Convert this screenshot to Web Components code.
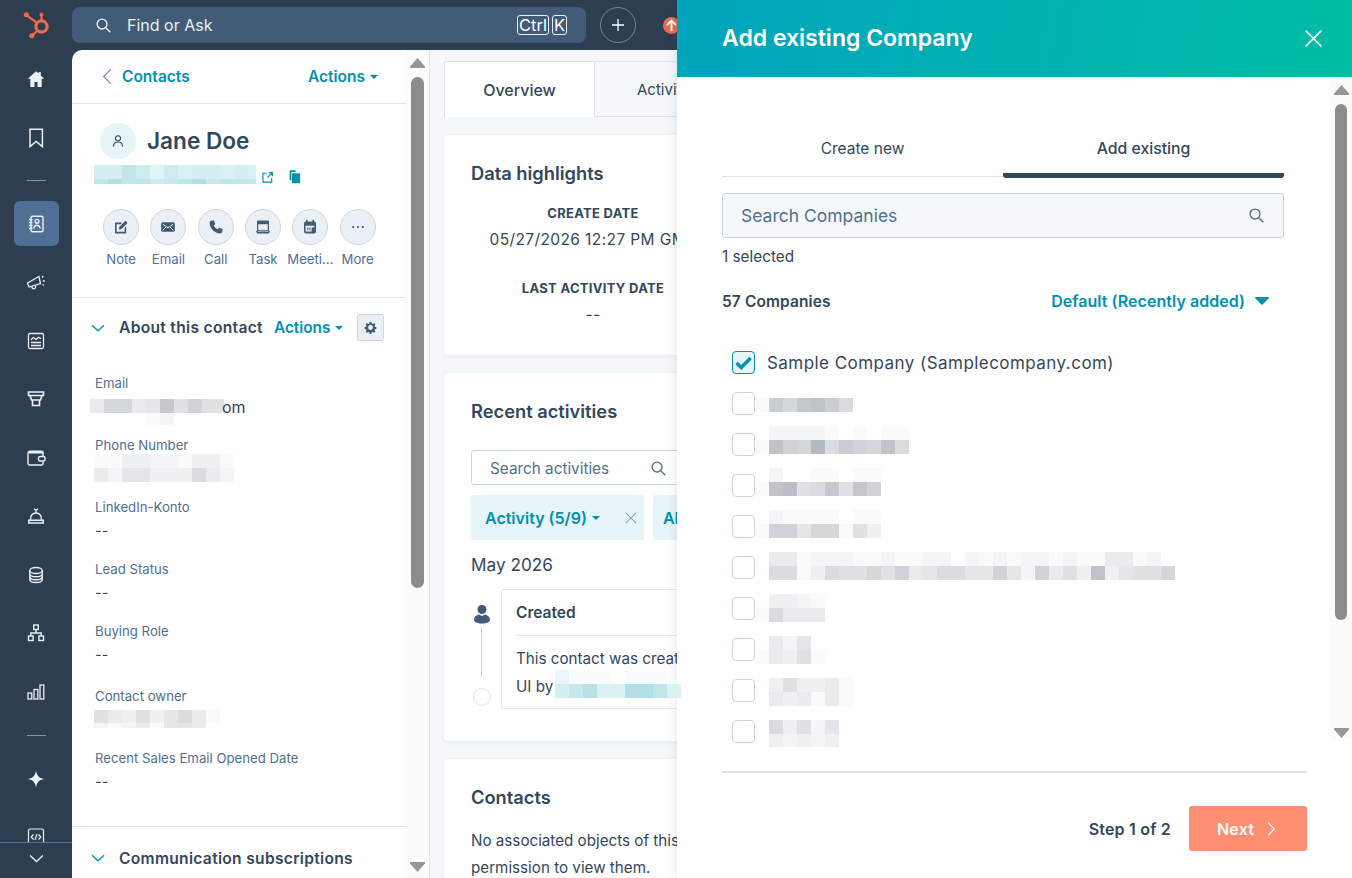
<!doctype html>
<html lang="en"><head><meta charset="utf-8"><title>Add existing Company</title>
<style>
html,body{margin:0;height:100%;overflow:hidden;background:#2d3e50}
body{font-family:"Inter","Noto Sans",sans-serif;color:#33475b;--teal:#0091ae;--ink:#33475b;--soft:#516f90}
</style></head><body>
<hs-app></hs-app>
<script>
const ICON={
home:'<path fill="currentColor" d="M10 2.200 1.800 9.800h2.500V18h4.200v-5h3V18h4.200V9.800h2.500L14.800 6.400V3h-2.100v1.500z"/>',
mark:'<path fill="none" stroke="currentColor" stroke-width="1.500" d="M4 1.200h12.400v17.400l-6.200-5.200-6.200 5.200z"/>',
book:'<g fill="none" stroke="currentColor" stroke-width="1.400"><rect x="5" y="2.200" width="12" height="15.600" rx="1.500"/><path d="M3 5.500h3.600M3 8.500h3.600M3 11.500h3.600M3 14.500h3.600"/><circle cx="11" cy="7.300" r="1.900"/><path d="M7.800 14.500c.3-2.300 1.500-3.200 3.200-3.200s2.900.9 3.200 3.200"/></g>',
horn:'<g fill="none" stroke="currentColor" stroke-width="1.300"><path d="M1.500 11 13 4.500l1.500 7L3 15z"/><path d="M6 14.200c-.2 1.800.5 2.600 1.800 2.600s2-.9 1.700-3.300"/><path d="M16 5.500 17.300 3.800M16.800 9h2M16.500 12.500l1.500.8"/></g>',
report:'<g fill="none" stroke="currentColor" stroke-width="1.300"><rect x="2.500" y="2.500" width="15" height="15" rx="1.500"/><path d="M5 8.800l2.500-2.300 2.500 2 2.500-2.300 2.500 1.600M5 11.500h10M5 14.500h10"/></g>',
store:'<g fill="none" stroke="currentColor" stroke-width="1.600"><path d="M2.500 3h15v3.500h-15zM4 6.500l1.500 4.500h9L16 6.500M6.500 11v5.500h7V11"/></g>',
wallet:'<g fill="none" stroke="currentColor" stroke-width="1.400"><path d="M17 6V4.500c0-.8-.6-1.300-1.300-1.300H4.500C3 3.200 2 4 2 5.500v9.500c0 1.300.9 2 2 2h11.700c.8 0 1.300-.6 1.300-1.300V14"/><path d="M3 4.800h12.700c.8 0 1.300.5 1.300 1.300v2.400"/><rect x="12.500" y="8.500" width="6.500" height="4.500" rx="1.500"/></g>',
bell:'<g fill="none" stroke="currentColor" stroke-width="1.400"><path d="M4.500 13.800c0-4 2-6.800 5.500-6.800s5.500 2.800 5.500 6.800M10 7V4M8 2.800 10 4.300l2-1.500"/><path d="M2.700 14.300h14.600v2.700H2.700z"/></g>',
db:'<g fill="none" stroke="currentColor" stroke-width="1.400"><ellipse cx="10" cy="5.500" rx="6.200" ry="3"/><path d="M3.800 5.500v9c0 1.700 2.800 3 6.200 3s6.200-1.300 6.200-3v-9M3.800 8.800c0 1.700 2.800 3 6.200 3s6.200-1.300 6.200-3M3.800 11.800c0 1.700 2.800 3 6.200 3s6.200-1.300 6.200-3"/></g>',
org:'<g fill="none" stroke="currentColor" stroke-width="1.400"><rect x="7.700" y="2" width="4.600" height="4.500"/><rect x="2.500" y="13" width="4.600" height="4.500"/><rect x="12.900" y="13" width="4.600" height="4.500"/><path d="M10 6.500V10M4.800 13v-3h10.400v3"/></g>',
bars:'<g fill="none" stroke="currentColor" stroke-width="1.300"><rect x="2" y="11" width="3.800" height="6"/><rect x="8" y="7.500" width="3.800" height="9.500"/><rect x="14" y="3" width="3.800" height="14"/></g>',
spark:'<path fill="currentColor" d="M10 1.500c.7 5 2.800 7.500 8 8.500-5.200 1-7.300 3.500-8 8.500-.7-5-2.800-7.500-8-8.500 5.200-1 7.300-3.500 8-8.500z"/>',
code:'<g fill="none" stroke="currentColor" stroke-width="1.200"><rect x="2.500" y="2" width="15" height="16" rx="1.500"/><path d="M7.500 7.500 5.200 10l2.300 2.500M12.500 7.500l2.300 2.500-2.300 2.500M11 7l-2 6"/></g>',
down:'<path fill="none" stroke="currentColor" stroke-width="1.600" d="M2.500 6.500 10 13.500l7.500-7"/>',
search:'<g fill="none" stroke="currentColor" stroke-width="1.600"><circle cx="8.300" cy="8.300" r="5.800"/><path d="M12.600 12.600 18 18"/></g>',
plus:'<path fill="none" stroke="currentColor" stroke-width="1.600" d="M10 2.500v15M2.500 10h15"/>',
back:'<path fill="none" stroke="currentColor" stroke-width="1.500" d="M14 1.500 5.500 10l8.500 8.500"/>',
x:'<path fill="none" stroke="currentColor" stroke-width="1.500" d="M2.500 2.500l15 15M17.500 2.500l-15 15"/>',
ext:'<g fill="none" stroke="currentColor" stroke-width="1.800"><path d="M9 3.500H3v13.500h13.500v-6M10 10l7.500-7.500M12 2.500h5.500V8"/></g>',
copy:'<g fill="currentColor"><path d="M6.500 5.500h9.500c1 0 1.500.6 1.500 1.500v10.500c0 1-.6 1.500-1.500 1.500H8c-1 0-1.500-.6-1.500-1.500z"/><path d="M4 1.500h7.500v2.500H5.800v11H3.500V2.300c0-.5.2-.8.5-.8z"/></g>',
user:'<g fill="none" stroke="currentColor" stroke-width="1.500"><circle cx="10" cy="6" r="3.600"/><path d="M3.500 18c.3-4.500 3-6.500 6.500-6.500s6.200 2 6.500 6.500"/></g>',
note:'<g fill="currentColor"><path d="M2.500 4.500h9l-2 2h-5v9.500h10v-5l2-2V18h-14z"/><path d="M8 9.800 15.500 2.300l2.700 2.700-7.500 7.500-3.400.7z"/></g>',
mail:'<rect x="1.500" y="4" width="17" height="12" rx="2" fill="currentColor"/><path fill="none" stroke="#eaf0f6" stroke-width="1.200" d="M3.500 6.500 10 11l6.500-4.500M3.500 14l4-4M16.500 14l-4-4"/>',
phone:'<path fill="currentColor" d="M4.500 2 7.500 1.800 9 6.300 7.200 8c.8 1.800 2.800 3.800 4.800 4.800l1.700-1.800 4.500 1.500-.2 3c-.2 1-1 2.500-3 2.500C8.500 18 2 11.500 2 5c0-2 1.500-2.800 2.500-3z"/>',
task:'<g fill="currentColor"><path d="M2.500 3.500c0-1 .6-1.500 1.500-1.500h12c.9 0 1.500.5 1.500 1.500v3h-15z"/><path fill="none" stroke="currentColor" stroke-width="1.500" d="M3.300 6v8.500M16.700 6v8.500"/><path d="M2.500 14c4-.9 11-.9 15 0l.8 1.200-.8 2.800h-15l-.8-2.800z"/></g><path fill="none" stroke="#eaf0f6" stroke-width="1" d="M3.500 15.500c4-.7 9-.7 13 0"/>',
meet:'<g fill="currentColor"><rect x="2.500" y="3" width="15" height="15" rx="2.500"/><rect x="5" y="1" width="2" height="4"/><rect x="13" y="1" width="2" height="4"/></g><path fill="#eaf0f6" d="M4.500 8.500H15.500v2H12v5H4.500z"/><path fill="currentColor" d="M6.500 10.500h1.300v3.500H6.500zM9.200 10.500h1.300v3.500H9.200z"/>',
dots:'<g fill="currentColor"><circle cx="4" cy="10" r="1.400"/><circle cx="10" cy="10" r="1.400"/><circle cx="16" cy="10" r="1.400"/></g>',
gear:'<path fill="currentColor" fill-rule="evenodd" d="M8.500 1.500h3l.4 2.300 1.500.7 2-1.300 2.100 2.100-1.300 2 .6 1.500 2.200.4v3l-2.200.4-.6 1.500 1.300 2-2.100 2.100-2-1.300-1.500.6-.4 2.200h-3l-.4-2.200-1.500-.6-2 1.300-2.100-2.100 1.300-2-.6-1.500-2.200-.4v-3l2.200-.4.6-1.500-1.300-2 2.100-2.100 2 1.300 1.500-.7zM10 6.300a3.700 3.700 0 1 0 0 7.400 3.700 3.700 0 0 0 0-7.400z"/>',
person:'<g fill="currentColor"><circle cx="10" cy="5.500" r="4.500"/><path d="M2 16c0-3 2.500-5 5-5.500l3 1.500 3-1.500c2.500.5 5 2.500 5 5.500 0 1.800-3.500 3.500-8 3.500s-8-1.700-8-3.500z"/></g>',
next:'<path fill="none" stroke="currentColor" stroke-width="1.500" d="M6.500 2 14 10l-7.500 8"/>',
caret:'<path fill="currentColor" d="M1 6h18l-9 9.500z"/>'
};
const svg=(n,s=20,extra='')=>`<svg viewBox="0 0 20 20" width="${s}" height="${s}" style="display:block;flex:none;${extra}" aria-hidden="true">${ICON[n]}</svg>`;
const caret=`<svg viewBox="0 0 8 4" width="8" height="4" style="flex:none" aria-hidden="true"><path fill="currentColor" d="M0 0h8L4 4z"/></svg>`;

class Base extends HTMLElement{
  connectedCallback(){ if(this.shadowRoot) return; this.attachShadow({mode:'open'}).innerHTML=this.view(); }
  attr(n,d=''){return this.hasAttribute(n)?this.getAttribute(n):d}
}
const def=(n,view)=>customElements.define(n,class extends Base{view(){return view(this)}});

/* pixelated redaction block */
def('hs-mosaic',el=>{
  const base=el.attr('tone')==='teal'?[150,212,221]:[176,181,188];
  const rows=el.attr('rows').split('|');
  const hs=el.attr('heights','14,14').split(',');
  const cw=+el.attr('cell','14');
  const mix=l=>{const t=parseInt(l,16)/15;return 'rgb('+base.map(b=>Math.round(255-(255-b)*t)).join(',')+')'};
  const body=rows.map((r,i)=>`<div class="r" style="height:${hs[i]}px">${[...r].map(c=>c==='0'?`<i style="background:transparent"></i>`:`<i style="background:${mix(c)}"></i>`).join('')}</div>`).join('');
  return `<style>:host{display:block;overflow:hidden;flex:none}.r{display:flex}i{display:block;width:${cw}px;flex:none}</style>${body}`;
});

def('hs-scrollbar',el=>`<style>
:host{display:flex;flex-direction:column;align-items:center;flex:none;box-sizing:border-box;background:#fbfbfb}
.t{flex:none;background:#8c8c8c;border-radius:7px}
.s{flex:1}
svg{flex:none;display:block}
</style>
<svg width="15" height="11" viewBox="0 0 15 11" style="margin-bottom:9px"><path fill="#969696" d="M7.500 1 14.500 9a1 1 0 0 1-.8 2H1.300a1 1 0 0 1-.8-2z"/></svg>
<div class="t" style="width:${el.attr('tw','13')}px;height:${el.attr('th')}px"></div>
<div class="s"></div>
<svg width="15" height="11" viewBox="0 0 15 11"><path fill="#969696" d="M7.500 10 14.500 2a1 1 0 0 0-.8-2H1.300a1 1 0 0 0-.8 2z"/></svg>`);

def('hs-nav-item',el=>`<style>
:host{display:flex;align-items:center;justify-content:center;height:58.500px;color:#eaf0f6;flex:none}
.b{width:45px;height:45px;border-radius:6px;display:flex;align-items:center;justify-content:center}
:host([active]) .b{background:#4f6f94}
</style><div class="b">${svg(el.attr('icon'),el.attr('size','20'))}</div>`);

def('hs-nav',()=>`<style>
:host{display:flex;flex-direction:column;width:72px;height:878px;background:#2d3e50;position:relative;overflow:hidden;flex:none}
.logo{height:50px;flex:none;display:flex;align-items:center;justify-content:center;color:#f2694a}
.sep{height:28.500px;flex:none;display:flex;align-items:center;justify-content:center}
.sep i{display:block;width:19px;height:1px;background:#8097b0}
.foot{position:absolute;left:0;right:0;bottom:0;height:36px;box-sizing:border-box;padding-bottom:4px;background:#2d3e50;border-top:1px solid #516f90;color:#eaf0f6;display:flex;align-items:center;justify-content:center}
</style>
<div class="logo"><svg width="28" height="28" viewBox="0 0 28 28" style="margin:-1px 0 0 2px"><g fill="none" stroke="currentColor"><circle cx="18.500" cy="15.500" r="5.600" stroke-width="3.200"/><path stroke-width="2.200" d="M18.500 9.500V3.500M13.800 11.600 3.800 4.300M14.300 19.700 9.300 24.500"/></g><g fill="currentColor"><circle cx="18.500" cy="3.500" r="2"/><circle cx="3.300" cy="3.800" r="2.500"/><circle cx="8.800" cy="24.800" r="2.500"/></g></svg></div>
<hs-nav-item icon="home"></hs-nav-item>
<hs-nav-item icon="mark"></hs-nav-item>
<div class="sep" style="height:27.500px"><i></i></div>
<hs-nav-item icon="book" active></hs-nav-item>
<hs-nav-item icon="horn"></hs-nav-item>
<hs-nav-item icon="report"></hs-nav-item>
<hs-nav-item icon="store"></hs-nav-item>
<hs-nav-item icon="wallet"></hs-nav-item>
<hs-nav-item icon="bell"></hs-nav-item>
<hs-nav-item icon="db"></hs-nav-item>
<hs-nav-item icon="org"></hs-nav-item>
<hs-nav-item icon="bars"></hs-nav-item>
<div class="sep"><i></i></div>
<hs-nav-item icon="spark"></hs-nav-item>
<hs-nav-item icon="code"></hs-nav-item>
<div class="foot">${svg('down',17)}</div>`);

def('hs-topbar',()=>`<style>
:host{display:flex;align-items:center;height:50px;flex:none;background:#2d3e50;color:#fff}
.s{width:514px;height:36px;box-sizing:border-box;background:#425b76;border-radius:8px;display:flex;align-items:center;padding:0 19px 0 23px;font-size:16px;color:#eaf0f6}
.s span.t{margin-left:15px;flex:1}
kbd{font:inherit;font-size:16.500px;line-height:18px;border:1px solid #eaf0f6;border-radius:3px;padding:0 1px;margin-left:3px;color:#fff}
.p{margin-left:14px;width:36px;height:36px;box-sizing:border-box;border:1px solid #6f88a3;border-radius:50%;display:flex;align-items:center;justify-content:center}
.u{margin-left:27px;width:17px;height:17px;border-radius:50%;background:#e66e50;display:flex;align-items:center;justify-content:center}
</style>
<div class="s">${svg('search',17)}<span class="t">Find or Ask</span><kbd>Ctrl</kbd><kbd>K</kbd></div>
<div class="p">${svg('plus',16)}</div>
<div class="u"><svg width="11" height="12" viewBox="0 0 11 12"><path fill="none" stroke="#fff" stroke-width="1.800" d="M5.500 12V2M1 6l4.500-4.500L10 6"/></svg></div>`);

def('hs-link',el=>`<style>
:host{display:inline-flex;align-items:center;gap:5px;color:#0091ae;font-weight:600;font-size:var(--ls,15.300px);white-space:nowrap}
</style><slot></slot>${el.hasAttribute('caret')?caret:''}`);

def('hs-action',el=>`<style>
:host{display:flex;flex-direction:column;align-items:center;width:47.300px;flex:none}
.c{width:36px;height:36px;box-sizing:border-box;border-radius:50%;background:#eaf0f6;border:1px solid #cbd6e2;color:#425b76;display:flex;align-items:center;justify-content:center}
.l{margin-top:5px;font-size:13.200px;line-height:18px;color:#516f90;white-space:nowrap}
</style><div class="c">${svg(el.attr('icon'),16)}</div><div class="l"><slot></slot></div>`);

def('hs-field',el=>`<style>
:host{display:block;height:62px;overflow:visible}
.l{font-size:13.200px;line-height:18px;padding-top:2px;color:#516f90;padding-left:23px;white-space:nowrap}
.v{font-size:14.500px;line-height:24px;padding:3px 0 0 23px;color:#33475b}
</style><div class="l">${el.attr('label')}</div><slot name="m"></slot>${el.hasAttribute('empty')?'<div class="v">--</div>':''}`);

def('hs-record',()=>`<style>
:host{display:block;width:334px;height:828px;flex:none;background:#fff;border-radius:10px 0 0 0;overflow:hidden;color:#33475b}
.h{height:53px;border-bottom:1px solid #dfe3eb;display:flex;align-items:center;padding:0 28px 0 27px;color:#7c98b6}
.h .c{margin-left:6px;flex:1;--ls:15.500px}
.h hs-link{--ls:15.500px}
.who{display:flex;align-items:center;padding:19px 0 0 28px}
.av{width:36px;height:36px;border-radius:50%;background:#e5f5f8;display:flex;align-items:center;justify-content:center;color:#33475b}
h1{margin:0 0 0 11px;font-size:22.600px;font-weight:600;line-height:36px}
.mail{display:flex;align-items:flex-start;margin:6px 0 0 22px;color:#0091ae;height:19px}
.acts{display:flex;margin:25px 0 0 25.500px;height:88px}
.d{border-top:1px solid #dfe3eb}
.ab{display:flex;align-items:center;height:27px;margin-top:16px;padding-left:18px;color:#0091ae}
.ab b{font-size:15.600px;letter-spacing:.3px;font-weight:600;color:#33475b;margin-left:13px;width:155px;white-space:nowrap}
.gear{width:27px;height:27px;box-sizing:border-box;margin-left:auto;margin-right:22px;border:1px solid #cbd6e2;border-radius:3px;background:#eaf0f6;display:flex;align-items:center;justify-content:center;color:#425b76}
.fields{margin-top:31px}
.cs{display:flex;align-items:center;height:30px;padding-left:18px;margin-top:16px;color:#0091ae}
.cs b{font-size:15.600px;letter-spacing:.3px;font-weight:600;color:#33475b;margin-left:13px;white-space:nowrap}
.om{display:flex;align-items:flex-start}
.om span{font-size:16px;line-height:16px;margin:0 0 0 -2px;color:#33475b}
</style>
<div class="h">${svg('back',17)}<hs-link class="c">Contacts</hs-link><hs-link caret>Actions</hs-link></div>
<div class="who"><div class="av">${svg('user',14)}</div><h1>Jane Doe</h1></div>
<div class="mail"><hs-mosaic tone="teal" style="width:162px" heights="14,5" rows="669747566565|9b99789b8998"></hs-mosaic><span style="margin:6px 0 0 5px">${svg('ext',13)}</span><span style="margin:4px 0 0 13px">${svg('copy',15)}</span></div>
<div class="acts">
<hs-action icon="note">Note</hs-action><hs-action icon="mail">Email</hs-action><hs-action icon="phone">Call</hs-action><hs-action icon="task">Task</hs-action><hs-action icon="meet">Meeti...</hs-action><hs-action icon="dots">More</hs-action>
</div>
<div class="d"></div>
<div class="ab">${svg('down',16)}<b>About this contact</b><hs-link caret>Actions</hs-link><div class="gear">${svg('gear',13)}</div></div>
<div class="fields">
<hs-field label="Email"><div slot="m" class="om" style="margin:7px 0 0 18px"><hs-mosaic style="width:134px;height:26px" heights="14,12" rows="4884 5b6966|0000120000"></hs-mosaic><span>om</span></div></hs-field>
<hs-field label="Phone Number"><hs-mosaic slot="m" style="width:140px;margin-left:22px" rows="1133221331|4255333742"></hs-mosaic></hs-field>
<hs-field label="LinkedIn-Konto" empty></hs-field>
<hs-field label="Lead Status" empty></hs-field>
<hs-field label="Buying Role" empty></hs-field>
<hs-field label="Contact owner" style="margin-top:3px"><hs-mosaic slot="m" style="width:126px;margin:5px 0 0 22px" heights="13,5" rows="643635741|212415540"></hs-mosaic></hs-field>
<hs-field label="Recent Sales Email Opened Date" empty></hs-field>
</div>
<div class="d" style="margin-top:17px"></div>
<div class="cs">${svg('down',16)}<b>Communication subscriptions</b></div>`.replace('4884 5b6966','48845b6966'));

def('hs-card',el=>`<style>
:host{display:block;background:#fff;border-radius:4px;box-shadow:0 1px 5px rgba(45,62,80,.08);padding:24px 0 0 27px;box-sizing:border-box;margin-top:18px;overflow:hidden}
h2{margin:0;font-size:18.300px;font-weight:600;line-height:28px;color:#33475b;white-space:nowrap}
</style><h2>${el.attr('heading')}</h2><slot></slot>`);

def('hs-stat',el=>`<style>
:host{display:block;width:244px;text-align:center;white-space:nowrap}
.k{font-size:13px;font-weight:700;line-height:20px;padding-top:1px;margin-bottom:-1px;letter-spacing:.3px;color:#33475b;text-transform:uppercase}
.v{font-size:15.500px;letter-spacing:.4px;line-height:24px;color:#33475b;margin-top:var(--g,6px)}
</style><div class="k">${el.attr('k')}</div><div class="v">${el.attr('v')}</div>`);

def('hs-chip',el=>`<style>
:host{display:flex;align-items:center;height:45px;background:#e5f5f8;border-radius:3px;padding:0 0 0 var(--pl,14px);box-sizing:border-box;color:#0091ae;font-weight:600;font-size:16px;white-space:nowrap;flex:none}
.x{margin:0 6px 0 24px;color:#7c98b6}
</style><slot></slot>${el.hasAttribute('caret')?`<span style="margin-left:5px;display:flex">${caret}</span>`:''}${el.hasAttribute('close')?`<span class="x">${svg('x',14)}</span>`:''}`);

def('hs-main',()=>`<style>
:host{display:block;flex:1;min-width:0;background:#f5f8fa;padding:11px 14px 0;box-sizing:border-box;height:828px;color:#33475b}
.tabs{display:flex;height:56px}
.tab{box-sizing:border-box;height:56px;display:flex;align-items:center;justify-content:center;font-size:15px;white-space:nowrap}
.on{width:151px;background:#fff;border:1px solid #dfe3eb;border-bottom:0;font-weight:500;font-size:16px}
.off{flex:1;border-bottom:1px solid #dfe3eb;border-top:1px solid #dfe3eb;justify-content:flex-start;padding-left:42px;color:#33475b;background:#f5f8fa}
.st{margin-top:15px;--g:6px}
.search{margin-top:25px;height:35px;width:700px;box-sizing:border-box;border:1px solid #cbd6e2;border-radius:3px;display:flex;align-items:center;padding:1px 0 0 18px;font-size:15.300px;color:#516f90}
.search span{width:160px}
.chips{display:flex;gap:9px;margin-top:10px}
.month{margin-top:12px;font-size:17.200px;line-height:26px}
.tl{display:flex;margin-top:11px}
.rail{width:30px;flex:none;display:flex;flex-direction:column;align-items:flex-start;height:120px;color:#425b76}
.rail i{display:block;width:1px;height:50px;background:#cbd6e2;margin:3px 0 0 10px}
.rail u{display:block;width:18px;height:18px;box-sizing:border-box;border:1px solid #dfe3eb;border-radius:50%;margin:11px 0 0 2px}
.box{width:800px;height:120px;box-sizing:border-box;border:1px solid #dfe3eb;border-radius:3px;padding:12px 0 0 14px}
.box b{display:block;font-size:15.500px;font-weight:600;line-height:22px}
.box hr{border:0;border-top:1px solid #dfe3eb;margin:11px 0 9px;height:0}
.ln{font-size:15.200px;line-height:28px;white-space:nowrap;display:flex;height:28px}
.p{margin:16px 0 0;font-size:15.200px;line-height:27px;white-space:nowrap}
</style>
<div class="tabs"><div class="tab on">Overview</div><div class="tab off">Activities</div></div>
<hs-card heading="Data highlights" style="height:220px">
<hs-stat class="st" k="Create date" v="05/27/2026 12:27 PM GMT"></hs-stat>
<hs-stat style="margin-top:25px;--g:6px" k="Last activity date" v="--"></hs-stat>
</hs-card>
<hs-card heading="Recent activities" style="height:368px">
<div class="search"><span>Search activities</span>${svg('search',17,'margin-left:0;color:#516f90')}</div>
<div class="chips"><hs-chip caret close>Activity (5/9)</hs-chip><hs-chip caret style="--pl:10px">All users</hs-chip></div>
<div class="month">May 2026</div>
<div class="tl"><div class="rail"><span style="margin-top:15px">${svg('person',20,'margin-left:1px')}</span><i></i><u></u></div>
<div class="box"><b>Created</b><hr><div class="ln">This contact was created from CRM</div><div class="ln"><span>UI by</span><hs-mosaic tone="teal" style="width:126px;margin:-3px 0 0 2px;position:relative;z-index:50" rows="311101110|68a55bb95"></hs-mosaic></div></div></div>
</hs-card>
<hs-card heading="Contacts" style="height:130px">
<div class="p">No associated objects of this type exist or you don't have<br>permission to view them.</div>
</hs-card>`);

def('hs-company',el=>`<style>
:host{display:flex;align-items:flex-start;height:41px;flex:none}
.cb{width:23px;height:23px;box-sizing:border-box;border:1px solid #cbd6e2;border-radius:4px;background:#fff;margin-left:10px;flex:none;display:flex;align-items:center;justify-content:center}
:host([checked]) .cb{border:1px solid #0091ae;background:#e5f5f8;color:#0091ae}
.l{margin-left:12px;font-size:17px;letter-spacing:.45px;line-height:24px;color:#33475b;white-space:nowrap}
</style><div class="cb">${el.hasAttribute('checked')?'<svg width="17" height="14" viewBox="0 0 17 14"><path fill="none" stroke="currentColor" stroke-width="3.400" d="M1.500 7 6.300 11.500 15.500 2"/></svg>':''}</div><slot></slot>${el.attr('label')?`<div class="l">${el.attr('label')}</div>`:''}`);

def('hs-panel',()=>`<style>
:host{position:absolute;left:677px;top:0;width:675px;height:878px;background:#fff;z-index:10;display:flex;flex-direction:column;box-shadow:0 0 10px rgba(45,62,80,.14);color:#33475b}
.hd{height:77px;flex:none;background:linear-gradient(100deg,#00a4bd 0%,#00bda5 100%);display:flex;align-items:center;justify-content:space-between;padding:0 28px 0 45px;color:#fff}
.hd h2{margin:0;font-size:23px;font-weight:600;line-height:77px;white-space:nowrap}
.mid{display:flex;height:673px;flex:none;overflow:hidden}
.c{flex:1;padding:52px 23px 0 45px;min-width:0}
.tabs{display:grid;grid-template-columns:281px 281px;align-items:start;width:562px}
.t{height:48px;box-sizing:border-box;border-bottom:1px solid #dfe3eb;display:flex;align-items:flex-start;justify-content:center;font-size:15.500px;line-height:39px;white-space:nowrap}
.t.on{height:49px;border-bottom:5px solid #33475b;border-radius:0 0 3px 3px;font-weight:500;font-size:15.800px}
.s{margin-top:15px;width:562px;height:45px;box-sizing:border-box;background:#f5f8fa;border:1px solid #cbd6e2;border-radius:3px;display:flex;align-items:center;justify-content:space-between;padding:0 18px;font-size:17.500px;color:#516f90}
.sel{margin-top:8px;line-height:20px;padding-top:1px;margin-bottom:-1px;font-size:15.300px;color:#33475b}
.cnt{display:flex;justify-content:space-between;align-items:center;width:562px;margin-top:24px;height:22px;box-sizing:border-box;padding-right:15px}
.cnt b{font-size:15.500px;letter-spacing:.1px;font-weight:600}
.sort{display:flex;align-items:center;gap:10px;color:#0091ae;font-size:16px;letter-spacing:.05px;font-weight:600;white-space:nowrap}
.rows{margin-top:39px}
.ft{margin:21px 45px 0;flex:none}
.ft hr{margin:0;border:0;border-top:2px solid #dfe3eb}
.ftr{display:flex;justify-content:flex-end;align-items:center;margin-top:33px;font-size:16px;letter-spacing:.2px;font-weight:600}
.ftr span{padding-top:1px}
.next{margin-left:18px;width:118px;height:45px;background:#ff8f73;border-radius:3px;color:#fff;display:flex;align-items:center;justify-content:center;gap:9px;font-weight:600}
</style>
<div class="hd"><h2>Add existing Company</h2>${svg('x',21)}</div>
<div class="mid"><div class="c">
<div class="tabs"><div class="t">Create new</div><div class="t on">Add existing</div></div>
<div class="s"><span>Search Companies</span>${svg('search',17)}</div>
<div class="sel">1 selected</div>
<div class="cnt"><b>57 Companies</b><div class="sort">Default (Recently added) <svg width="14" height="8" viewBox="0 0 14 8"><path fill="#0091ae" d="M.7 0h12.600a.7.7 0 0 1 .5 1.200L7 8 .2 1.200A.7.7 0 0 1 .7 0z"/></svg></div></div>
<div class="rows">
<hs-company checked label="Sample Company (Samplecompany.com)"></hs-company>
<hs-company><hs-mosaic style="margin-top:6px" rows="1a8bca7"></hs-mosaic></hs-company>
<hs-company><hs-mosaic style="margin-top:-7px" rows="02222101011|1c98e7a98c7"></hs-mosaic></hs-company>
<hs-company><hs-mosaic style="margin-top:-6px" rows="020011011|1cd67b6b9"></hs-mosaic></hs-company>
<hs-company><hs-mosaic style="margin-top:-5px" rows="021111011|199588 6b3"></hs-mosaic></hs-company>
<hs-company><hs-mosaic style="margin-top:-4px" rows="044122211211220212122121144120|077137668694577559529463c35668"></hs-mosaic></hs-company>
<hs-company><hs-mosaic style="margin-top:-3px" rows="03321|17444"></hs-mosaic></hs-company>
<hs-company><hs-mosaic style="margin-top:-2px" rows="04250|14361"></hs-mosaic></hs-company>
<hs-company><hs-mosaic style="margin-top:-1px" rows="0363341|0434141"></hs-mosaic></hs-company>
<hs-company><hs-mosaic rows="073625|032323" heights="14,13"></hs-mosaic></hs-company>
</div></div>
<hs-scrollbar th="516" tw="12" style="width:22px;height:662px;padding:7px 0 0"></hs-scrollbar></div>
<div class="ft"><hr><div class="ftr"><span>Step 1 of 2</span><div class="next"><span>Next</span> ${svg('next',16)}</div></div></div>`.replace('199588 6b3','199588163'.slice(0,9)));

def('hs-app',()=>`<style>
:host{display:flex;width:1352px;height:878px;position:relative;overflow:hidden}
.r{flex:1;min-width:0;display:flex;flex-direction:column}
.b{display:flex;height:828px;background:#2d3e50}
</style>
<hs-nav></hs-nav>
<div class="r"><hs-topbar></hs-topbar><div class="b"><hs-record></hs-record>
<hs-scrollbar th="511" style="width:24px;height:828px;padding:7px 0 5px;border-right:1px solid #dfe3eb;box-sizing:border-box"></hs-scrollbar>
<hs-main></hs-main></div></div>
<hs-panel></hs-panel>`);
</script>
</body></html>
